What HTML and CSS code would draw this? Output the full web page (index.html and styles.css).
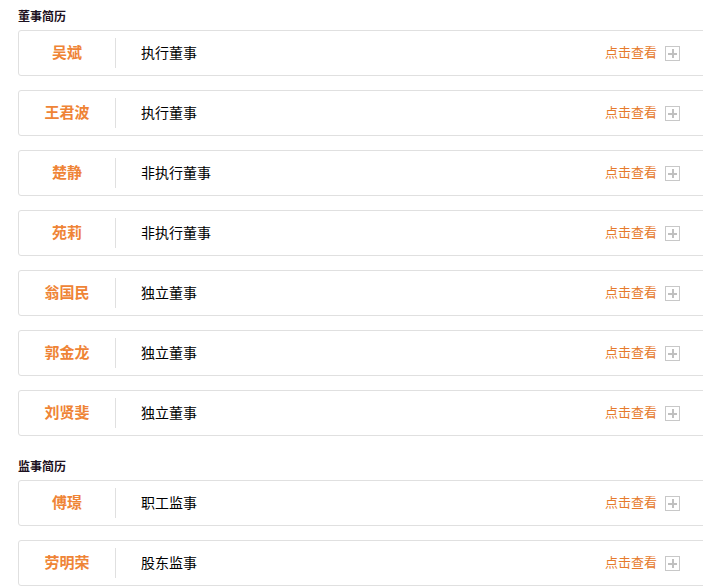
FILE: index.html
```html
<!DOCTYPE html>
<html lang="zh">
<head>
<meta charset="utf-8">
<title>董事简历</title>
<link rel="stylesheet" href="styles.css">
</head>
<body>
<div class="page">
  <section class="section">
    <h2 class="section-title">董事简历</h2>
    <div class="card"><div class="name">吴斌</div><div class="divider"></div><div class="role">执行董事</div><div class="more"><span class="more-text">点击查看</span><span class="plus"></span></div></div>
    <div class="card"><div class="name">王君波</div><div class="divider"></div><div class="role">执行董事</div><div class="more"><span class="more-text">点击查看</span><span class="plus"></span></div></div>
    <div class="card"><div class="name">楚静</div><div class="divider"></div><div class="role">非执行董事</div><div class="more"><span class="more-text">点击查看</span><span class="plus"></span></div></div>
    <div class="card"><div class="name">苑莉</div><div class="divider"></div><div class="role">非执行董事</div><div class="more"><span class="more-text">点击查看</span><span class="plus"></span></div></div>
    <div class="card"><div class="name">翁国民</div><div class="divider"></div><div class="role">独立董事</div><div class="more"><span class="more-text">点击查看</span><span class="plus"></span></div></div>
    <div class="card"><div class="name">郭金龙</div><div class="divider"></div><div class="role">独立董事</div><div class="more"><span class="more-text">点击查看</span><span class="plus"></span></div></div>
    <div class="card"><div class="name">刘贤斐</div><div class="divider"></div><div class="role">独立董事</div><div class="more"><span class="more-text">点击查看</span><span class="plus"></span></div></div>
  </section>
  <section class="section">
    <h2 class="section-title">监事简历</h2>
    <div class="card"><div class="name">傅璟</div><div class="divider"></div><div class="role">职工监事</div><div class="more"><span class="more-text">点击查看</span><span class="plus"></span></div></div>
    <div class="card"><div class="name">劳明荣</div><div class="divider"></div><div class="role">股东监事</div><div class="more"><span class="more-text">点击查看</span><span class="plus"></span></div></div>
  </section>
</div>
</body>
</html>
```
FILE: styles.css
```css
html, body {
  margin: 0;
  padding: 0;
  background: #fff;
  overflow: hidden;
}
body {
  font-family: "Noto Sans CJK SC", "Liberation Sans", sans-serif;
  color: #000;
}
.page {
  padding-left: 18px;
  width: 720px;
}
.section {
  padding-top: 6px;
}
.section-title {
  margin: 0 0 4px 0;
  font-size: 12px;
  line-height: 20px;
  font-weight: bold;
  color: #1c1020;
}
.card {
  box-sizing: border-box;
  width: 720px;
  height: 46px;
  margin-bottom: 14px;
  border: 1px solid #e0e0e0;
  border-radius: 3px;
  display: flex;
  align-items: center;
  padding-right: 57px;
}
.name {
  width: 96px;
  text-align: center;
  font-size: 15px;
  font-weight: bold;
  color: #ef8436;
  line-height: 20px;
  margin-top: -2px;
}
.divider {
  width: 1px;
  height: 30px;
  background: #e0e0e0;
}
.role {
  padding-left: 25px;
  font-size: 14px;
  line-height: 20px;
  color: #000;
  margin-top: -2px;
}
.more {
  margin-left: auto;
  display: flex;
  align-items: center;
  gap: 8px;
}
.more-text {
  font-size: 13px;
  line-height: 18px;
  color: #e67a2c;
  margin-top: -2px;
}
.plus {
  position: relative;
  box-sizing: border-box;
  width: 15px;
  height: 15px;
  border: 1px solid #c8c8c8;
  margin-top: 1px;
}
.plus::before,
.plus::after {
  content: "";
  position: absolute;
  background: #c0c0c0;
}
.plus::before {
  left: 2px;
  right: 2px;
  top: 5.5px;
  height: 2px;
}
.plus::after {
  top: 2px;
  bottom: 2px;
  left: 5.5px;
  width: 2px;
}
```
